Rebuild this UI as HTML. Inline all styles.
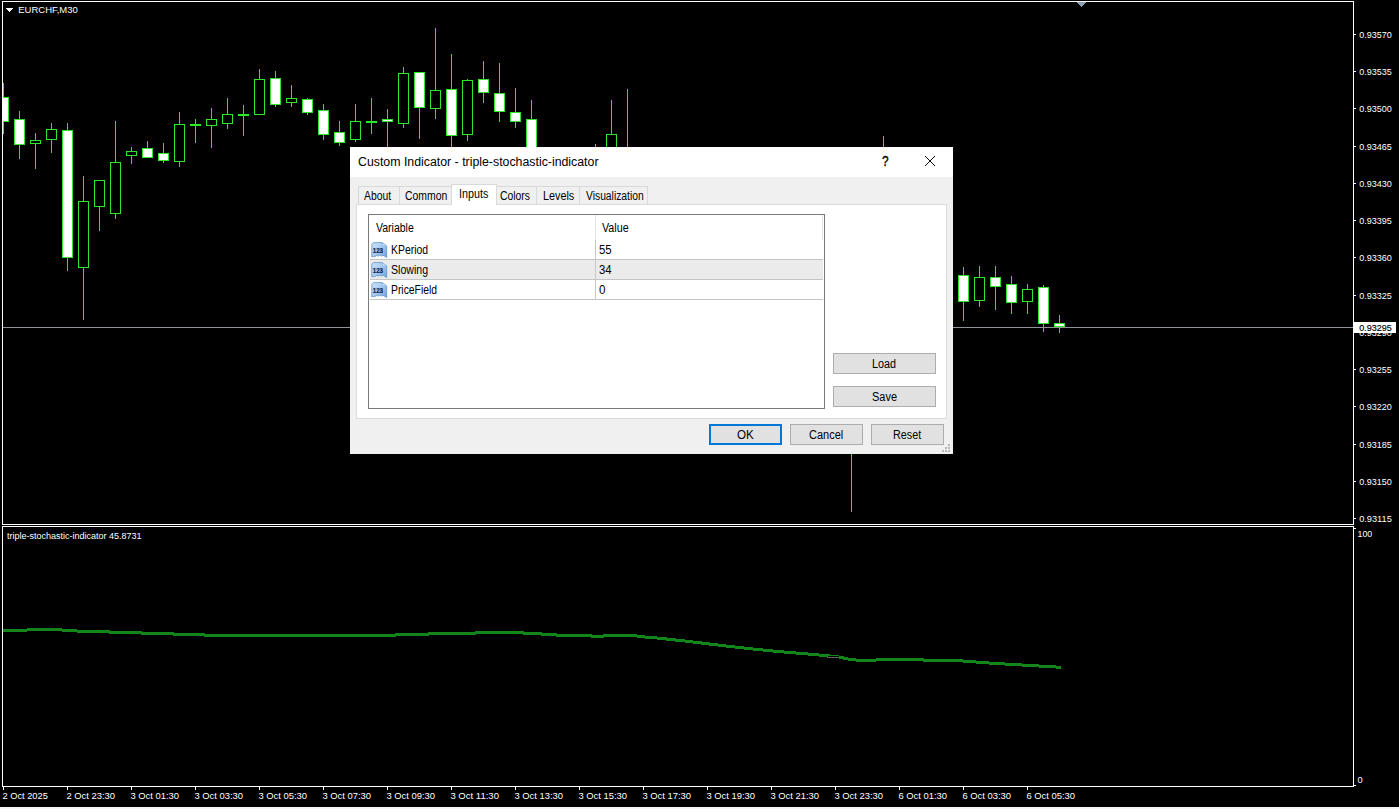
<!DOCTYPE html>
<html><head><meta charset="utf-8"><title>EURCHF,M30</title>
<style>
html,body{margin:0;padding:0;background:#000;}
body{width:1399px;height:809px;position:relative;overflow:hidden;font-family:"Liberation Sans",sans-serif;}
#chart{position:absolute;left:0;top:0;}
#dlg{position:absolute;left:350px;top:147px;width:603px;height:307px;background:#f0f0f0;color:#000;font-size:12px;}
#dlg *{box-sizing:border-box;}
#dlg .abs{position:absolute;white-space:nowrap;line-height:1;z-index:3;transform-origin:0 0;}
#titlebar{position:absolute;left:0;top:0;width:603px;height:30px;background:#fff;}
#closex{position:absolute;left:574px;top:8px;}
.tab{position:absolute;top:39px;height:19px;background:#f0f0f0;border:1px solid #d9d9d9;border-bottom:none;}
.tab.sel{top:37px;height:21px;background:#fff;z-index:2;}
.tab span{position:absolute;white-space:nowrap;line-height:1;transform-origin:0 0;}
#page{position:absolute;left:6px;top:57px;width:591px;height:215px;background:#fff;border:1px solid #dcdcdc;}
#list{position:absolute;left:18px;top:67px;width:457px;height:195px;background:#fff;border:1px solid #7a7a7a;}
.row{position:absolute;left:20px;width:453px;height:20px;border-bottom:1px solid #c4c4c4;}
.row.alt{background:#ebebeb;}
.vline{position:absolute;width:1px;}
.btn{position:absolute;background:#e1e1e1;border:1px solid #adadad;}
.btn span{position:absolute;white-space:nowrap;line-height:1;transform-origin:0 0;}
.btn.def{border:2px solid #0078d7;}
.ico{position:absolute;left:21px;z-index:3;}

</style></head><body>
<svg id="chart" width="1399" height="809" viewBox="0 0 1399 809" shape-rendering="crispEdges">
<rect x="2" y="1" width="1352" height="1" fill="#ffffff"/>
<rect x="2" y="1" width="1" height="524" fill="#ffffff"/>
<rect x="1353" y="1" width="1" height="524" fill="#ffffff"/>
<rect x="2" y="524" width="1352" height="1" fill="#ffffff"/>
<rect x="2" y="526" width="1352" height="1" fill="#ffffff"/>
<rect x="2" y="526" width="1" height="261" fill="#ffffff"/>
<rect x="1353" y="526" width="1" height="261" fill="#ffffff"/>
<rect x="2" y="786" width="1352" height="1" fill="#ffffff"/>
<rect x="0" y="807" width="1399" height="2" fill="#f6f6f6"/>
<path d="M1076.5 2 L1086.5 2 L1081.5 7.5 Z" fill="#8d9fb3"/>
<path d="M6 8 L13.4 8 L9.7 12.4 Z" fill="#fff"/>
<clipPath id="cc"><rect x="3" y="2" width="1350" height="522"/></clipPath><g clip-path="url(#cc)">
<rect x="3" y="83" width="1" height="51" fill="#4fd04f"/>
<rect x="-2" y="97" width="11" height="25" fill="#2ee62e"/>
<rect x="-1" y="98" width="9" height="23" fill="#fff"/>
<rect x="19" y="111" width="1" height="48" fill="#4fd04f"/>
<rect x="14" y="119" width="11" height="26" fill="#2ee62e"/>
<rect x="15" y="120" width="9" height="24" fill="#fff"/>
<rect x="35" y="133" width="1" height="36" fill="#4fd04f"/>
<rect x="30" y="140" width="11" height="4" fill="#2ee62e"/>
<rect x="31" y="141" width="9" height="2" fill="#000"/>
<rect x="51" y="123" width="1" height="30" fill="#4fd04f"/>
<rect x="46" y="129" width="11" height="11" fill="#2ee62e"/>
<rect x="47" y="130" width="9" height="9" fill="#000"/>
<rect x="67" y="123" width="1" height="148" fill="#4fd04f"/>
<rect x="62" y="130" width="11" height="128" fill="#2ee62e"/>
<rect x="63" y="131" width="9" height="126" fill="#fff"/>
<rect x="83" y="176" width="1" height="144" fill="#4fd04f"/>
<rect x="78" y="201" width="11" height="67" fill="#2ee62e"/>
<rect x="79" y="202" width="9" height="65" fill="#000"/>
<rect x="99" y="180" width="1" height="51" fill="#4fd04f"/>
<rect x="94" y="180" width="11" height="27" fill="#2ee62e"/>
<rect x="95" y="181" width="9" height="25" fill="#000"/>
<rect x="115" y="121" width="1" height="98" fill="#4fd04f"/>
<rect x="110" y="162" width="11" height="52" fill="#2ee62e"/>
<rect x="111" y="163" width="9" height="50" fill="#000"/>
<rect x="131" y="147" width="1" height="17" fill="#4fd04f"/>
<rect x="126" y="151" width="11" height="5" fill="#2ee62e"/>
<rect x="127" y="152" width="9" height="3" fill="#000"/>
<rect x="147" y="141" width="1" height="17" fill="#4fd04f"/>
<rect x="142" y="148" width="11" height="10" fill="#2ee62e"/>
<rect x="143" y="149" width="9" height="8" fill="#fff"/>
<rect x="163" y="143" width="1" height="20" fill="#4fd04f"/>
<rect x="158" y="153" width="11" height="8" fill="#2ee62e"/>
<rect x="159" y="154" width="9" height="6" fill="#fff"/>
<rect x="179" y="112" width="1" height="55" fill="#4fd04f"/>
<rect x="174" y="124" width="11" height="38" fill="#2ee62e"/>
<rect x="175" y="125" width="9" height="36" fill="#000"/>
<rect x="195" y="119" width="1" height="24" fill="#4fd04f"/>
<rect x="190" y="124" width="11" height="2" fill="#22f022"/>
<rect x="211" y="108" width="1" height="40" fill="#4fd04f"/>
<rect x="206" y="119" width="11" height="7" fill="#2ee62e"/>
<rect x="207" y="120" width="9" height="5" fill="#000"/>
<rect x="227" y="98" width="1" height="31" fill="#4fd04f"/>
<rect x="222" y="114" width="11" height="10" fill="#2ee62e"/>
<rect x="223" y="115" width="9" height="8" fill="#000"/>
<rect x="243" y="105" width="1" height="31" fill="#4fd04f"/>
<rect x="238" y="114" width="11" height="2" fill="#22f022"/>
<rect x="259" y="69" width="1" height="46" fill="#4fd04f"/>
<rect x="254" y="79" width="11" height="36" fill="#2ee62e"/>
<rect x="255" y="80" width="9" height="34" fill="#000"/>
<rect x="275" y="71" width="1" height="36" fill="#4fd04f"/>
<rect x="270" y="78" width="11" height="27" fill="#2ee62e"/>
<rect x="271" y="79" width="9" height="25" fill="#fff"/>
<rect x="291" y="85" width="1" height="22" fill="#4fd04f"/>
<rect x="286" y="98" width="11" height="5" fill="#2ee62e"/>
<rect x="287" y="99" width="9" height="3" fill="#000"/>
<rect x="307" y="98" width="1" height="17" fill="#4fd04f"/>
<rect x="302" y="99" width="11" height="14" fill="#2ee62e"/>
<rect x="303" y="100" width="9" height="12" fill="#fff"/>
<rect x="323" y="104" width="1" height="36" fill="#4fd04f"/>
<rect x="318" y="110" width="11" height="25" fill="#2ee62e"/>
<rect x="319" y="111" width="9" height="23" fill="#fff"/>
<rect x="339" y="121" width="1" height="25" fill="#4fd04f"/>
<rect x="334" y="132" width="11" height="11" fill="#2ee62e"/>
<rect x="335" y="133" width="9" height="9" fill="#fff"/>
<rect x="355" y="104" width="1" height="38" fill="#4fd04f"/>
<rect x="350" y="121" width="11" height="19" fill="#2ee62e"/>
<rect x="351" y="122" width="9" height="17" fill="#000"/>
<rect x="371" y="98" width="1" height="36" fill="#4fd04f"/>
<rect x="366" y="121" width="11" height="2" fill="#22f022"/>
<rect x="387" y="109" width="1" height="57" fill="#4fd04f"/>
<rect x="382" y="119" width="11" height="3" fill="#2ee62e"/>
<rect x="383" y="120" width="9" height="1" fill="#fff"/>
<rect x="403" y="67" width="1" height="61" fill="#4fd04f"/>
<rect x="398" y="73" width="11" height="51" fill="#2ee62e"/>
<rect x="399" y="74" width="9" height="49" fill="#000"/>
<rect x="419" y="72" width="1" height="67" fill="#4fd04f"/>
<rect x="414" y="72" width="11" height="36" fill="#2ee62e"/>
<rect x="415" y="73" width="9" height="34" fill="#fff"/>
<rect x="435" y="28" width="1" height="91" fill="#4fd04f"/>
<rect x="430" y="90" width="11" height="19" fill="#2ee62e"/>
<rect x="431" y="91" width="9" height="17" fill="#000"/>
<rect x="451" y="54" width="1" height="112" fill="#4fd04f"/>
<rect x="446" y="89" width="11" height="47" fill="#2ee62e"/>
<rect x="447" y="90" width="9" height="45" fill="#fff"/>
<rect x="467" y="79" width="1" height="62" fill="#4fd04f"/>
<rect x="462" y="80" width="11" height="55" fill="#2ee62e"/>
<rect x="463" y="81" width="9" height="53" fill="#000"/>
<rect x="483" y="61" width="1" height="42" fill="#4fd04f"/>
<rect x="478" y="79" width="11" height="14" fill="#2ee62e"/>
<rect x="479" y="80" width="9" height="12" fill="#fff"/>
<rect x="499" y="63" width="1" height="59" fill="#4fd04f"/>
<rect x="494" y="93" width="11" height="19" fill="#2ee62e"/>
<rect x="495" y="94" width="9" height="17" fill="#fff"/>
<rect x="515" y="88" width="1" height="40" fill="#4fd04f"/>
<rect x="510" y="112" width="11" height="10" fill="#2ee62e"/>
<rect x="511" y="113" width="9" height="8" fill="#fff"/>
<rect x="531" y="100" width="1" height="76" fill="#4fd04f"/>
<rect x="526" y="119" width="11" height="52" fill="#2ee62e"/>
<rect x="527" y="120" width="9" height="50" fill="#fff"/>
<rect x="595" y="144" width="1" height="22" fill="#4fd04f"/>
<rect x="611" y="100" width="1" height="76" fill="#4fd04f"/>
<rect x="606" y="134" width="11" height="37" fill="#2ee62e"/>
<rect x="607" y="135" width="9" height="35" fill="#000"/>
<rect x="627" y="89" width="1" height="87" fill="#4fd04f"/>
<rect x="851" y="440" width="1" height="72" fill="#4fd04f"/>
<rect x="883" y="136" width="1" height="25" fill="#4fd04f"/>
<rect x="963" y="267" width="1" height="54" fill="#4fd04f"/>
<rect x="958" y="275" width="11" height="27" fill="#2ee62e"/>
<rect x="959" y="276" width="9" height="25" fill="#fff"/>
<rect x="979" y="266" width="1" height="41" fill="#4fd04f"/>
<rect x="974" y="277" width="11" height="24" fill="#2ee62e"/>
<rect x="975" y="278" width="9" height="22" fill="#000"/>
<rect x="995" y="266" width="1" height="44" fill="#4fd04f"/>
<rect x="990" y="277" width="11" height="10" fill="#2ee62e"/>
<rect x="991" y="278" width="9" height="8" fill="#fff"/>
<rect x="1011" y="276" width="1" height="38" fill="#4fd04f"/>
<rect x="1006" y="284" width="11" height="19" fill="#2ee62e"/>
<rect x="1007" y="285" width="9" height="17" fill="#fff"/>
<rect x="1027" y="284" width="1" height="30" fill="#4fd04f"/>
<rect x="1022" y="289" width="11" height="13" fill="#2ee62e"/>
<rect x="1023" y="290" width="9" height="11" fill="#000"/>
<rect x="1043" y="285" width="1" height="47" fill="#4fd04f"/>
<rect x="1038" y="287" width="11" height="37" fill="#2ee62e"/>
<rect x="1039" y="288" width="9" height="35" fill="#fff"/>
<rect x="1059" y="315" width="1" height="18" fill="#4fd04f"/>
<rect x="1054" y="323" width="11" height="4" fill="#2ee62e"/>
<rect x="1055" y="324" width="9" height="2" fill="#fff"/>
</g>
<rect x="2" y="1" width="1" height="524" fill="#ffffff"/>
<rect x="3" y="327" width="1350" height="1" fill="#90949a"/>
<rect x="1354" y="34" width="2" height="1" fill="#fff"/>
<text x="1359.2" y="37.7" font-family="Liberation Sans, sans-serif" font-size="9.2" fill="#fff" textLength="32.6" lengthAdjust="spacingAndGlyphs">0.93570</text>
<rect x="1354" y="71" width="2" height="1" fill="#fff"/>
<text x="1359.2" y="74.7" font-family="Liberation Sans, sans-serif" font-size="9.2" fill="#fff" textLength="32.6" lengthAdjust="spacingAndGlyphs">0.93535</text>
<rect x="1354" y="108" width="2" height="1" fill="#fff"/>
<text x="1359.2" y="111.7" font-family="Liberation Sans, sans-serif" font-size="9.2" fill="#fff" textLength="32.6" lengthAdjust="spacingAndGlyphs">0.93500</text>
<rect x="1354" y="146" width="2" height="1" fill="#fff"/>
<text x="1359.2" y="149.7" font-family="Liberation Sans, sans-serif" font-size="9.2" fill="#fff" textLength="32.6" lengthAdjust="spacingAndGlyphs">0.93465</text>
<rect x="1354" y="183" width="2" height="1" fill="#fff"/>
<text x="1359.2" y="186.7" font-family="Liberation Sans, sans-serif" font-size="9.2" fill="#fff" textLength="32.6" lengthAdjust="spacingAndGlyphs">0.93430</text>
<rect x="1354" y="220" width="2" height="1" fill="#fff"/>
<text x="1359.2" y="223.7" font-family="Liberation Sans, sans-serif" font-size="9.2" fill="#fff" textLength="32.6" lengthAdjust="spacingAndGlyphs">0.93395</text>
<rect x="1354" y="257" width="2" height="1" fill="#fff"/>
<text x="1359.2" y="260.7" font-family="Liberation Sans, sans-serif" font-size="9.2" fill="#fff" textLength="32.6" lengthAdjust="spacingAndGlyphs">0.93360</text>
<rect x="1354" y="295" width="2" height="1" fill="#fff"/>
<text x="1359.2" y="298.7" font-family="Liberation Sans, sans-serif" font-size="9.2" fill="#fff" textLength="32.6" lengthAdjust="spacingAndGlyphs">0.93325</text>
<rect x="1354" y="332" width="2" height="1" fill="#fff"/>
<text x="1359.2" y="335.7" font-family="Liberation Sans, sans-serif" font-size="9.2" fill="#fff" textLength="32.6" lengthAdjust="spacingAndGlyphs">0.93290</text>
<rect x="1354" y="369" width="2" height="1" fill="#fff"/>
<text x="1359.2" y="372.7" font-family="Liberation Sans, sans-serif" font-size="9.2" fill="#fff" textLength="32.6" lengthAdjust="spacingAndGlyphs">0.93255</text>
<rect x="1354" y="406" width="2" height="1" fill="#fff"/>
<text x="1359.2" y="409.7" font-family="Liberation Sans, sans-serif" font-size="9.2" fill="#fff" textLength="32.6" lengthAdjust="spacingAndGlyphs">0.93220</text>
<rect x="1354" y="444" width="2" height="1" fill="#fff"/>
<text x="1359.2" y="447.7" font-family="Liberation Sans, sans-serif" font-size="9.2" fill="#fff" textLength="32.6" lengthAdjust="spacingAndGlyphs">0.93185</text>
<rect x="1354" y="481" width="2" height="1" fill="#fff"/>
<text x="1359.2" y="484.7" font-family="Liberation Sans, sans-serif" font-size="9.2" fill="#fff" textLength="32.6" lengthAdjust="spacingAndGlyphs">0.93150</text>
<rect x="1354" y="518" width="2" height="1" fill="#fff"/>
<text x="1359.2" y="521.7" font-family="Liberation Sans, sans-serif" font-size="9.2" fill="#fff" textLength="32.6" lengthAdjust="spacingAndGlyphs">0.93115</text>
<rect x="1354" y="322" width="42" height="11" fill="#fff"/>
<text x="1359.2" y="330.5" font-family="Liberation Sans, sans-serif" font-size="9.2" fill="#000" stroke="#000" stroke-width="0.15" textLength="32.6" lengthAdjust="spacingAndGlyphs">0.93295</text>
<rect x="1354" y="528" width="2" height="1" fill="#fff"/>
<rect x="1354" y="785" width="2" height="1" fill="#fff"/>
<text x="1357.6" y="536.8" font-family="Liberation Sans, sans-serif" font-size="9.2" fill="#fff" textLength="14.6" lengthAdjust="spacingAndGlyphs">100</text>
<text x="1357.4" y="783" font-family="Liberation Sans, sans-serif" font-size="9.2" fill="#fff">0</text>
<text x="18.3" y="12.9" font-family="Liberation Sans, sans-serif" font-size="9.2" fill="#fff" textLength="59.5" lengthAdjust="spacingAndGlyphs">EURCHF,M30</text>
<text x="7.1" y="538.9" font-family="Liberation Sans, sans-serif" font-size="9.2" fill="#fff" textLength="134.5" lengthAdjust="spacingAndGlyphs">triple-stochastic-indicator 45.8731</text>
<rect x="3" y="787" width="1" height="3" fill="#fff"/>
<text x="2.4" y="798.8" font-family="Liberation Sans, sans-serif" font-size="9.2" fill="#fff" textLength="45.5" lengthAdjust="spacingAndGlyphs">2 Oct 2025</text>
<rect x="67" y="787" width="1" height="3" fill="#fff"/>
<text x="66.4" y="798.8" font-family="Liberation Sans, sans-serif" font-size="9.2" fill="#fff" textLength="48.6" lengthAdjust="spacingAndGlyphs">2 Oct 23:30</text>
<rect x="131" y="787" width="1" height="3" fill="#fff"/>
<text x="130.4" y="798.8" font-family="Liberation Sans, sans-serif" font-size="9.2" fill="#fff" textLength="48.6" lengthAdjust="spacingAndGlyphs">3 Oct 01:30</text>
<rect x="195" y="787" width="1" height="3" fill="#fff"/>
<text x="194.4" y="798.8" font-family="Liberation Sans, sans-serif" font-size="9.2" fill="#fff" textLength="48.6" lengthAdjust="spacingAndGlyphs">3 Oct 03:30</text>
<rect x="259" y="787" width="1" height="3" fill="#fff"/>
<text x="258.4" y="798.8" font-family="Liberation Sans, sans-serif" font-size="9.2" fill="#fff" textLength="48.6" lengthAdjust="spacingAndGlyphs">3 Oct 05:30</text>
<rect x="323" y="787" width="1" height="3" fill="#fff"/>
<text x="322.4" y="798.8" font-family="Liberation Sans, sans-serif" font-size="9.2" fill="#fff" textLength="48.6" lengthAdjust="spacingAndGlyphs">3 Oct 07:30</text>
<rect x="387" y="787" width="1" height="3" fill="#fff"/>
<text x="386.4" y="798.8" font-family="Liberation Sans, sans-serif" font-size="9.2" fill="#fff" textLength="48.6" lengthAdjust="spacingAndGlyphs">3 Oct 09:30</text>
<rect x="451" y="787" width="1" height="3" fill="#fff"/>
<text x="450.4" y="798.8" font-family="Liberation Sans, sans-serif" font-size="9.2" fill="#fff" textLength="48.6" lengthAdjust="spacingAndGlyphs">3 Oct 11:30</text>
<rect x="515" y="787" width="1" height="3" fill="#fff"/>
<text x="514.4" y="798.8" font-family="Liberation Sans, sans-serif" font-size="9.2" fill="#fff" textLength="48.6" lengthAdjust="spacingAndGlyphs">3 Oct 13:30</text>
<rect x="579" y="787" width="1" height="3" fill="#fff"/>
<text x="578.4" y="798.8" font-family="Liberation Sans, sans-serif" font-size="9.2" fill="#fff" textLength="48.6" lengthAdjust="spacingAndGlyphs">3 Oct 15:30</text>
<rect x="643" y="787" width="1" height="3" fill="#fff"/>
<text x="642.4" y="798.8" font-family="Liberation Sans, sans-serif" font-size="9.2" fill="#fff" textLength="48.6" lengthAdjust="spacingAndGlyphs">3 Oct 17:30</text>
<rect x="707" y="787" width="1" height="3" fill="#fff"/>
<text x="706.4" y="798.8" font-family="Liberation Sans, sans-serif" font-size="9.2" fill="#fff" textLength="48.6" lengthAdjust="spacingAndGlyphs">3 Oct 19:30</text>
<rect x="771" y="787" width="1" height="3" fill="#fff"/>
<text x="770.4" y="798.8" font-family="Liberation Sans, sans-serif" font-size="9.2" fill="#fff" textLength="48.6" lengthAdjust="spacingAndGlyphs">3 Oct 21:30</text>
<rect x="835" y="787" width="1" height="3" fill="#fff"/>
<text x="834.4" y="798.8" font-family="Liberation Sans, sans-serif" font-size="9.2" fill="#fff" textLength="48.6" lengthAdjust="spacingAndGlyphs">3 Oct 23:30</text>
<rect x="899" y="787" width="1" height="3" fill="#fff"/>
<text x="898.4" y="798.8" font-family="Liberation Sans, sans-serif" font-size="9.2" fill="#fff" textLength="48.6" lengthAdjust="spacingAndGlyphs">6 Oct 01:30</text>
<rect x="963" y="787" width="1" height="3" fill="#fff"/>
<text x="962.4" y="798.8" font-family="Liberation Sans, sans-serif" font-size="9.2" fill="#fff" textLength="48.6" lengthAdjust="spacingAndGlyphs">6 Oct 03:30</text>
<rect x="1027" y="787" width="1" height="3" fill="#fff"/>
<text x="1026.4" y="798.8" font-family="Liberation Sans, sans-serif" font-size="9.2" fill="#fff" textLength="48.6" lengthAdjust="spacingAndGlyphs">6 Oct 05:30</text>
<polyline fill="none" stroke="#12861a" stroke-width="3" shape-rendering="crispEdges" points="3,630 27,630 29,629.3 60,629.3 62,630 75,630 77,631 108,631 110,632.2 140,632.2 142,633.3 172,633.3 174,634.3 203,634.3 205,635.2 395,635.2 397,634.2 428,634.2 430,633.3 475,633.3 477,632.2 522,632.2 524,633.3 540,633.3 542,634.2 555,634.2 557,635.3 590,635.3 592,636.2 603,636.2 605,635.2 630,635.2 645,637 660,638.3 690,641.6 720,645.3 750,648.7 780,651.7 810,654.2 837,656.6 850,659.4 860,660.4 875,660.4 877,659.5 922,659.5 925,660.4 955,660.4 990,663.1 1020,664.9 1061,667.3"/>
<rect x="828" y="656" width="11" height="4" fill="#000"/>
<rect x="827" y="657" width="12" height="1" fill="#5d6a5d"/>
</svg>
<div id="dlg">
 <div id="titlebar"></div>
 <div class="abs" style="left:7.6px;top:9.1px;font-size:12px;transform:scaleX(1.0274);">Custom Indicator - triple-stochastic-indicator</div>
 <div class="abs" style="left:531.9px;top:7.1px;font-size:14px;transform:scaleX(0.8465);-webkit-text-stroke:0.35px #000;">?</div>
 <div class="abs" style="left:25.9px;top:75.4px;font-size:12px;transform:scaleX(0.8762);">Variable</div>
 <div class="abs" style="left:252.3px;top:75.4px;font-size:12px;transform:scaleX(0.8956);">Value</div>
 <div class="abs" style="left:41.1px;top:96.5px;font-size:12px;transform:scaleX(0.8688);">KPeriod</div>
 <div class="abs" style="left:41.0px;top:116.5px;font-size:12px;transform:scaleX(0.8827);">Slowing</div>
 <div class="abs" style="left:41.3px;top:136.5px;font-size:12px;transform:scaleX(0.8621);">PriceField</div>
 <div class="abs" style="left:248.6px;top:96.5px;font-size:12px;transform:scaleX(0.9432);">55</div>
 <div class="abs" style="left:248.6px;top:116.5px;font-size:12px;transform:scaleX(0.9432);">34</div>
 <div class="abs" style="left:248.6px;top:136.5px;font-size:12px;transform:scaleX(0.9720);">0</div>
 <svg id="closex" width="12" height="12" viewBox="0 0 12 12"><path d="M1 1 L11 11 M11 1 L1 11" stroke="#000" stroke-width="0.95" fill="none"/></svg>
 <div class="tab" style="left:8px;width:42px"><span style="left:5.4px;top:2.7px;transform:scaleX(0.8642)">About</span></div>
 <div class="tab" style="left:49px;width:53px"><span style="left:5.0px;top:2.7px;transform:scaleX(0.8668)">Common</span></div>
 <div class="tab sel" style="left:101px;width:46px"><span style="left:6.6px;top:2.8px;transform:scaleX(0.8959)">Inputs</span></div>
 <div class="tab" style="left:146px;width:41px"><span style="left:3.2px;top:2.7px;transform:scaleX(0.8649)">Colors</span></div>
 <div class="tab" style="left:186px;width:44px"><span style="left:5.5px;top:2.7px;transform:scaleX(0.8995)">Levels</span></div>
 <div class="tab" style="left:229px;width:69px"><span style="left:6.3px;top:2.7px;transform:scaleX(0.8592)">Visualization</span></div>
 <div id="page"></div>
 <div id="list"></div>
 <div class="vline" style="left:245px;top:68px;height:25px;background:#e5e5e5"></div>
 <div class="vline" style="left:472px;top:68px;height:25px;background:#e5e5e5"></div>
 <div class="row" style="top:93px"></div>
 <div class="row alt" style="top:113px"></div>
 <div class="row" style="top:133px"></div>
 <div class="vline" style="left:245px;top:93px;height:60px;background:#c8c8c8"></div>
 <svg class="ico" style="top:95px" width="17" height="16" viewBox="0 0 17 16"><defs><linearGradient id="g1" x1="0" y1="0" x2="1" y2="0.9"><stop offset="0" stop-color="#cde2f9"/><stop offset="0.55" stop-color="#a3c8f0"/><stop offset="1" stop-color="#6fa3df"/></linearGradient></defs><path d="M0.8 2.2 L2.4 0.6 L11.4 0.6 L15.7 4 L15.7 15.6 L13.6 14.3 L12 13.2 L10.4 14.1 L8.8 13.2 L7.2 14.1 L5.6 13.5 L3.6 14.8 L2.2 14.4 L0.8 14.9 Z" fill="url(#g1)" stroke="#6494cc" stroke-width="0.8"/><path d="M11.4 0.8 L11.4 4 L15.5 4 Z" fill="#d5e6f9" stroke="#7ba7dc" stroke-width="0.5"/><text x="1.7" y="11" font-family="Liberation Sans, sans-serif" font-weight="bold" font-size="7.8" fill="#08245c" stroke="#08245c" stroke-width="0.2" textLength="10.4" lengthAdjust="spacingAndGlyphs">123</text></svg>

 <svg class="ico" style="top:115px" width="17" height="16" viewBox="0 0 17 16"><defs><linearGradient id="g2" x1="0" y1="0" x2="1" y2="0.9"><stop offset="0" stop-color="#cde2f9"/><stop offset="0.55" stop-color="#a3c8f0"/><stop offset="1" stop-color="#6fa3df"/></linearGradient></defs><path d="M0.8 2.2 L2.4 0.6 L11.4 0.6 L15.7 4 L15.7 15.6 L13.6 14.3 L12 13.2 L10.4 14.1 L8.8 13.2 L7.2 14.1 L5.6 13.5 L3.6 14.8 L2.2 14.4 L0.8 14.9 Z" fill="url(#g2)" stroke="#6494cc" stroke-width="0.8"/><path d="M11.4 0.8 L11.4 4 L15.5 4 Z" fill="#d5e6f9" stroke="#7ba7dc" stroke-width="0.5"/><text x="1.7" y="11" font-family="Liberation Sans, sans-serif" font-weight="bold" font-size="7.8" fill="#08245c" stroke="#08245c" stroke-width="0.2" textLength="10.4" lengthAdjust="spacingAndGlyphs">123</text></svg>

 <svg class="ico" style="top:135px" width="17" height="16" viewBox="0 0 17 16"><defs><linearGradient id="g3" x1="0" y1="0" x2="1" y2="0.9"><stop offset="0" stop-color="#cde2f9"/><stop offset="0.55" stop-color="#a3c8f0"/><stop offset="1" stop-color="#6fa3df"/></linearGradient></defs><path d="M0.8 2.2 L2.4 0.6 L11.4 0.6 L15.7 4 L15.7 15.6 L13.6 14.3 L12 13.2 L10.4 14.1 L8.8 13.2 L7.2 14.1 L5.6 13.5 L3.6 14.8 L2.2 14.4 L0.8 14.9 Z" fill="url(#g3)" stroke="#6494cc" stroke-width="0.8"/><path d="M11.4 0.8 L11.4 4 L15.5 4 Z" fill="#d5e6f9" stroke="#7ba7dc" stroke-width="0.5"/><text x="1.7" y="11" font-family="Liberation Sans, sans-serif" font-weight="bold" font-size="7.8" fill="#08245c" stroke="#08245c" stroke-width="0.2" textLength="10.4" lengthAdjust="spacingAndGlyphs">123</text></svg>

 <div class="btn" style="left:483px;top:206px;width:103px;height:21px"><span style="left:37.5px;top:4.1px;transform:scaleX(0.8988)">Load</span></div>
 <div class="btn" style="left:483px;top:239px;width:103px;height:21px"><span style="left:37.7px;top:4.1px;transform:scaleX(0.9138)">Save</span></div>
 <div class="btn def" style="left:359px;top:277px;width:73px;height:21px"><span style="left:25.6px;top:3.1px;transform:scaleX(0.9686)">OK</span></div>
 <div class="btn" style="left:440px;top:277px;width:73px;height:21px"><span style="left:17.6px;top:4.1px;transform:scaleX(0.9154)">Cancel</span></div>
 <div class="btn" style="left:521px;top:277px;width:73px;height:21px"><span style="left:20.7px;top:4.1px;transform:scaleX(0.8993)">Reset</span></div>
 <svg class="grip" style="position:absolute;left:591px;top:296px" width="10" height="10" viewBox="0 0 10 10" shape-rendering="crispEdges"><g fill="#b8b8b8"><rect x="7" y="1" width="2" height="2"/><rect x="4" y="4" width="2" height="2"/><rect x="7" y="4" width="2" height="2"/><rect x="1" y="7" width="2" height="2"/><rect x="4" y="7" width="2" height="2"/><rect x="7" y="7" width="2" height="2"/></g></svg>
</div>
</body></html>
